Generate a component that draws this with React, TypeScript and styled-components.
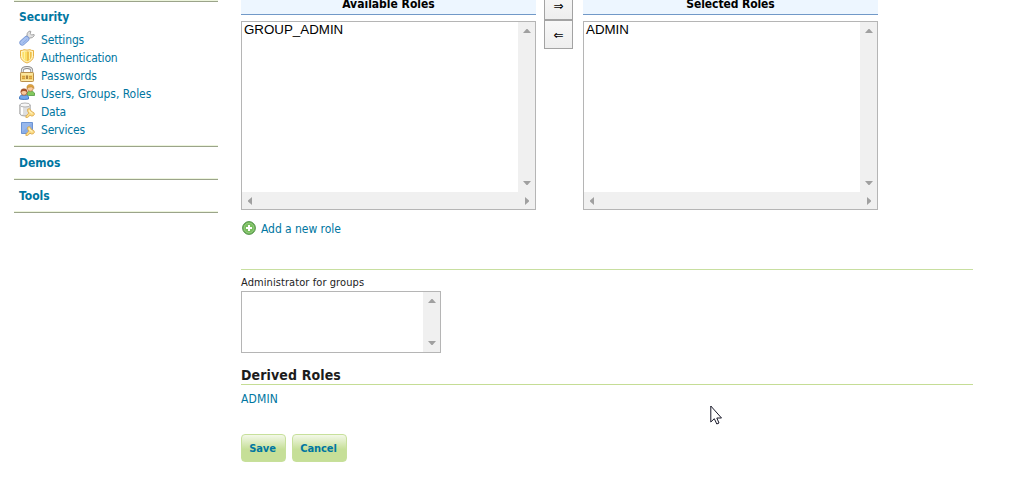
import React from "react";
import styled, { createGlobalStyle } from "styled-components";

const Global = createGlobalStyle`
  * { box-sizing: border-box; }
  html, body { margin: 0; background: #fff; overflow: hidden; }
  body { font-family: Tahoma, "DejaVu Sans Condensed", "DejaVu Sans", sans-serif; font-stretch: condensed; font-size: 12px; color: #222; }
`;
const Page = styled.div`
  display: flex; position: relative; width: 1015px; height: 500px; overflow: hidden; padding-left: 14px;
`;
const Sidebar = styled.nav`width: 204px; margin-right: 23px;`;
const Section = styled.section<{ $h: number }>`
  height: ${p => p.$h}px; padding-left: 5px;
  border-bottom: 1px solid #9ba48a; box-shadow: inset 0 -1px #edf5dd;
`;
const SectionTitle = styled.h3<{ $top?: number }>`
  margin: 0; padding-top: ${p => p.$top ?? 7}px; height: 28px; font-size: 12px; line-height: 18px; color: #0076a1;
`;
const Item = styled.a<{ $ls?: number }>`
  display: flex; align-items: flex-start; gap: 6px; height: 18px; line-height: 20px; color: #0076a1; white-space: nowrap;
  letter-spacing: ${p => p.$ls ?? 0}px;
  svg { flex: none; }
`;
const Main = styled.main`width: 732px; display: flex; flex-direction: column;`;
const Palette = styled.div`display: flex; height: 210px;`;
const Column = styled.div`width: 295px;`;
const ColumnHead = styled.div<{ $ls?: number }>`
  height: 15px; background: #edf6ff; border-bottom: 1px solid #7199c8; margin-bottom: 6px;
  text-align: center; font-weight: bold; line-height: 8px; color: #000; letter-spacing: ${p => p.$ls ?? 0}px;
`;
const List = styled.div<{ $w: number; $h: number }>`
  width: ${p => p.$w}px; height: ${p => p.$h}px; border: 1px solid #b5b5b5; background: #fff;
  display: grid; grid-template-columns: 1fr 17px; grid-template-rows: 1fr auto;
`;
const Option = styled.div`
  font: 13.333px/16px "Liberation Sans", Arial, sans-serif; color: #000; padding-left: 2px;
`;
const Track = styled.div<{ $row?: boolean }>`
  background: #f0f0f0; display: flex; justify-content: space-between; align-items: center;
  flex-direction: ${p => (p.$row ? "row" : "column")};
  ${p => (p.$row ? "grid-column: 1 / 3; height: 17px; padding: 0 5px;" : "padding: 6px 0;")}
`;
const Moves = styled.div`width: 47px; padding-left: 8px; display: flex; flex-direction: column; margin-top: -9px;`;
const MoveButton = styled.button`
  width: 29px; height: 29px; padding: 0; border: 1px solid #a3a3a3;
  background: linear-gradient(#f8f8f8, #eee); display: flex; align-items: center; justify-content: center;
  font: 12px "DejaVu Sans", sans-serif; color: #000;
`;
const AddRole = styled.a`
  display: flex; align-items: flex-start; gap: 5px; height: 18px; line-height: 18px; margin: 10px 0 31px 1px; color: #0076a1;
  letter-spacing: -.05px;
  svg { margin-top: 1px; }
`;
const Groups = styled.div`border-top: 1px solid #c8dfa0; height: 97px; padding-top: 5px;`;
const Label = styled.label`display: block; font-size: 11px; line-height: 16px; color: #222; height: 16px; letter-spacing: .08px;`;
const Heading = styled.h4`
  margin: 0; height: 19px; border-bottom: 1px solid #c5dd95; font-size: 14px; line-height: 18px; color: #1c1c1c;
  letter-spacing: .12px;
`;
const RoleLink = styled.a`display: block; height: 49px; line-height: 29px; color: #0076a1; letter-spacing: .15px;`;
const Actions = styled.div`display: flex; gap: 6px;`;
const Action = styled.button<{ $w: number }>`
  width: ${p => p.$w}px; height: 28px; padding: 0 2px 0 0; border: 1px solid #c7e09b; border-radius: 4px;
  background: linear-gradient(#f3f8e8 0, #c6df98 55%, #c6df98 100%);
  font: bold 11px Tahoma, "DejaVu Sans Condensed", "DejaVu Sans", sans-serif; font-stretch: condensed; color: #0076a1;
  letter-spacing: -.1px;
`;
const Pointer = styled.svg`position: absolute; left: 710px; top: 405px;`;

const Arrow = ({ dir }: { dir: "up" | "down" | "left" | "right" }) => {
  const d = { up: "M0 5L3.5 1h1L8 5z", down: "M0 1h8L4.5 5h-1z", left: "M5 0v8L1 4.5v-1z", right: "M1 0v8L5 4.5v-1z" }[dir];
  const v = dir === "up" || dir === "down";
  return <svg width={v ? 8 : 6} height={v ? 6 : 8}><path d={d} fill="#a0a0a0" /></svg>;
};

const Key = () => (
  <g>
    <path d="M8.600 7.200l1.600-.6 1.600 1.500.4 1.200 2.600 1.300.7 1.600-1.400 1.700-2 .1-1-.8-2.500 2.300-1.700.1.100-1.700 2.800-2.800-1.100-1.700z" fill="#fbdc86" stroke="#d9a548" strokeWidth=".8" strokeLinejoin="round" />
    <path d="M10 8.200l.8 1.600 2.600 1.700" stroke="#fff3c0" strokeWidth="1.100" fill="none" />
  </g>
);
const Icon = ({ children }: { children: React.ReactNode }) => (
  <svg width="16" height="16" viewBox="0 0 16 16">{children}</svg>
);
const Wrench = () => (
  <Icon>
    <path d="M7.600 8.400L10.500 5.500" stroke="#a0a0a0" strokeWidth="4" />
    <path d="M8 6.200Q7.500 2.800 10 1.200l1.800.1-.5 2.500 1.200 1.200 2.600-.5.100 1.300q-1.500 2.500-4.800 2.300z" fill="#e2e2e2" stroke="#9c9c9c" strokeWidth=".9" />
    <path d="M3.300 12.700L7.500 8.900" stroke="#7c9bd6" strokeWidth="5.800" strokeLinecap="round" />
    <path d="M3.300 12.700L7.500 8.900" stroke="#a9c2f0" strokeWidth="4.200" strokeLinecap="round" />
    <path d="M3.600 13.300L8 9.300" stroke="#8fadE5" strokeWidth="1" />
  </Icon>
);
const Shield = () => (
  <Icon>
    <path d="M1.500 2.500Q3.500 2.700 5 1.700q3 .9 6 0 1.500 1 3.500.8v6q-.5 4.300-6.500 6.500Q2 12.800 1.500 8.500z" fill="#fff6c4" stroke="#e9b142" />
    <path d="M3.300 4L8 3.300v10.200Q3.500 11.800 3.300 8z" fill="#fbdf68" />
    <path d="M8 3.300l4.700.7v4q-.2 3.800-4.700 5.500z" fill="#efc04a" />
    <path d="M5.500 4v7.500M10.500 4v7.500" stroke="#fff0a0" strokeWidth="1" />
  </Icon>
);
const Lock = () => (
  <Icon>
    <path d="M3.300 8V4.600Q3.300 1.500 8 1.500t4.700 3.100V8" fill="none" stroke="#8b8b8b" strokeWidth="2.800" />
    <path d="M3.300 8V4.600Q3.300 1.500 8 1.500t4.700 3.100V8" fill="none" stroke="#e9e9e9" strokeWidth="1.200" />
    <rect x="1.500" y="6.500" width="13" height="9" rx=".8" fill="#f8dc86" stroke="#b98f4c" />
    <path d="M2.500 8h11M2.500 14.300h11" stroke="#fff0b3" />
    <path d="M3 11.500h3.200M9.800 11.500H13" stroke="#e6b54a" strokeWidth="3.400" />
    <path d="M3 10.500h3M3 12.500h3M10 10.500h3M10 12.500h3" stroke="#cf9534" strokeWidth=".7" />
    <path d="M7.200 9.500h1.600v3.500H7.200z" fill="#986d31" />
  </Icon>
);
const Users = () => (
  <Icon>
    <path d="M8 11V9q1-2 3.500-2t4 2v2.500h-6z" fill="#83c85e" stroke="#539943" strokeWidth=".8" />
    <circle cx="11.300" cy="4.200" r="3" fill="#f9cca0" stroke="#bb8144" strokeWidth=".7" />
    <path d="M7.900 4.500Q7.500.4 11.300.4t3.700 4.100q-1-1.800-2.800-1.600Q9 2.800 7.900 4.500z" fill="#dfa33e" stroke="#ba8130" strokeWidth=".5" />
    <path d="M.6 15v-2.300Q1.500 10.800 5 10.800t4.500 1.900V15q-4 1-8.900 0z" fill="#70a7ed" stroke="#3b72ba" strokeWidth=".9" />
    <circle cx="5" cy="8.300" r="3" fill="#f9c99c" stroke="#a65d32" strokeWidth=".8" />
    <path d="M1.600 8.500Q1.300 4.500 5 4.500t3.500 4Q7.500 6.700 5 6.900 2.500 6.700 1.600 8.500z" fill="#a5542b" />
  </Icon>
);
const Data = () => (
  <Icon>
    <path d="M.8 3v9Q1.500 14 6 14t5.200-2V3z" fill="#dedede" stroke="#a0a0a0" strokeWidth=".9" />
    <path d="M3 5v7.500" stroke="#fff" strokeWidth="2" />
    <ellipse cx="6" cy="3" rx="5.200" ry="2" fill="#f7f7f7" stroke="#aaa" strokeWidth=".9" />
    <Key />
  </Icon>
);
const Services = () => (
  <Icon>
    <path d="M2.500 2.500h11v11h-11z" fill="#8badE5" stroke="#6c94d4" />
    <path d="M3 3h10L3 12z" fill="#a2bff0" opacity=".6" />
    <Key />
  </Icon>
);
const Plus = () => (
  <svg width="14" height="14" viewBox="0 0 14 14">
    <circle cx="7" cy="7" r="6.400" fill="#5fac4b" stroke="#5b9650" />
    <circle cx="7" cy="7" r="5" fill="#79be5e" stroke="#a5d38f" strokeWidth=".8" />
    <path d="M7 4v6M4 7h6" stroke="#fff" strokeWidth="2" />
  </svg>
);

const RoleList = ({ title, role, ls }: { title: string; role: string; ls?: number }) => (
  <Column>
    <ColumnHead $ls={ls}>{title}</ColumnHead>
    <List $w={295} $h={189}>
      <Option>{role}</Option>
      <Track><Arrow dir="up" /><Arrow dir="down" /></Track>
      <Track $row><Arrow dir="left" /><Arrow dir="right" /></Track>
    </List>
  </Column>
);

export default function App() {
  return (
    <>
      <Global />
      <Page>
        <Sidebar>
          <Section $h={2} />
          <Section $h={145}>
            <SectionTitle $top={6}>Security</SectionTitle>
            <Item $ls={-0.15}><Wrench />Settings</Item>
            <Item $ls={-0.2}><Shield />Authentication</Item>
            <Item><Lock />Passwords</Item>
            <Item $ls={-0.05}><Users />Users, Groups, Roles</Item>
            <Item $ls={-0.2}><Data />Data</Item>
            <Item $ls={-0.2}><Services />Services</Item>
          </Section>
          <Section $h={33}><SectionTitle>Demos</SectionTitle></Section>
          <Section $h={33}><SectionTitle>Tools</SectionTitle></Section>
        </Sidebar>
        <Main>
          <Palette>
            <RoleList title="Available Roles" role="GROUP_ADMIN" />
            <Moves>
              <MoveButton>⇒</MoveButton>
              <MoveButton>⇐</MoveButton>
            </Moves>
            <RoleList title="Selected Roles" role="ADMIN" ls={-0.1} />
          </Palette>
          <AddRole><Plus />Add a new role</AddRole>
          <Groups>
            <Label>Administrator for groups</Label>
            <List $w={200} $h={62}>
              <div />
              <Track><Arrow dir="up" /><Arrow dir="down" /></Track>
            </List>
          </Groups>
          <Heading>Derived Roles</Heading>
          <RoleLink>ADMIN</RoleLink>
          <Actions>
            <Action $w={45}>Save</Action>
            <Action $w={55}>Cancel</Action>
          </Actions>
        </Main>
        <Pointer width="13" height="20" viewBox="0 0 13 20">
          <path d="M.8 1v16l3.500-3.300L6.800 19l2.200-1-2.200-5h4.700z" fill="#fff" stroke="#181828" strokeWidth="1" />
        </Pointer>
      </Page>
    </>
  );
}
